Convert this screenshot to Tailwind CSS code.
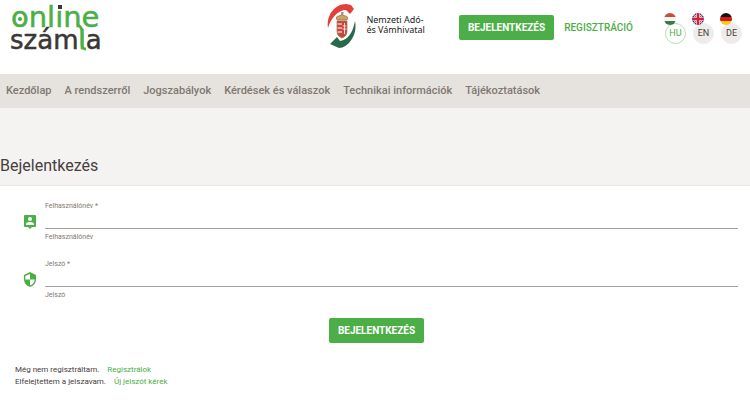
<!DOCTYPE html>
<html lang="hu">
<head>
    <meta charset="UTF-8">
    <meta name="viewport" content="width=device-width, initial-scale=1.0">
    <title>Online Számla - Bejelentkezés</title>
    <script src="https://cdn.jsdelivr.net/npm/@tailwindcss/browser@4"></script>
</head>
<body class="bg-white font-['Roboto',sans-serif] text-[#45403c]">
    <header class="flex items-start h-[74px] pl-[9px] pr-2">
        <a href="#" aria-label="Online Számla">
            <svg class="block w-24 h-14 overflow-visible" viewBox="0 0 96 56" font-family="DejaVu Sans, sans-serif" stroke-width=".5">
                <text x="2" y="27" font-size="29" fill="#4cae46" stroke="#4cae46">onl&#305;ne</text>
                <text x="1" y="49" font-size="26" fill="#3b3735" stroke="#3b3735">szám<tspan fill="#4cae46" stroke="#4cae46">l</tspan>a</text>
                <circle cx="11" cy="19" r="2" fill="#4cae46" />
                <rect x="49" y="5" width="4" height="4" fill="#3b3735" />
                <path d="M69 25 Q73 27 73 32 V45 Q73 49 77 49" fill="none" stroke="#4cae46" stroke-width="2.8" />
            </svg>
        </a>

        <div class="flex items-start ml-auto">
            <!-- Tax authority -->
            <div class="flex gap-2 pt-1 pr-[34px]">
                <svg class="w-8 h-11" viewBox="0 0 32 44">
                    <path d="M2 24 C0 11 9 0 20 0 L25 1 L28 5 L24 10 L20 6 C12 6 5 14 2 24Z" fill="#e2403b" />
                    <path d="M29 17 C32 31 22 44 13 44 L4 40 L11 33 L14 37 C22 36 27 28 29 17Z" fill="#28694b" />
                    <path d="M11 17 H21 V28 Q21 32 16 34 Q11 32 11 28Z" fill="#c9463c" stroke="#9c7a55" stroke-width=".7" />
                    <path d="M11.5 20 H16 M11.5 24 H16 M11.5 28 H16" stroke="#fff" stroke-width="1.2" />
                    <path d="M18.5 19 V30 M16.8 22 H20.2 M16.5 25 H20.5" stroke="#fff" stroke-width=".8" />
                    <path d="M11 16 Q9 12 13 12 Q16 9 19 12 Q23 12 21 16Z" fill="#c9a661" stroke="#926246" stroke-width=".7" />
                    <path d="M16 11 V8 M15 9 H18" stroke="#926246" stroke-width=".8" />
                </svg>
                <p class="pt-[11px] text-[9px] leading-[10px] text-[#222] font-['Noto_Sans',sans-serif]">Nemzeti Adó-<br>és Vámhivatal</p>
            </div>

            <div class="flex items-center gap-[10px] pt-[15px] pr-8 text-[10px] font-bold">
                <button type="button" class="h-[25px] px-[9px] rounded-xs bg-[#4cae46] text-white">BEJELENTKEZÉS</button>
                <a href="#" class="font-medium text-[#4cae46]">REGISZTRÁCIÓ</a>
            </div>

            <!-- Languages -->
            <nav aria-label="Nyelv" class="flex gap-[7px] pt-[23px] text-[9px]">
                <a href="#" class="relative flex items-center justify-center size-[21px] rounded-full border border-[#b5dcb0] text-[#4cae46]">HU
                    <svg class="absolute -left-[2px] -top-[11px] size-3 rounded-full" viewBox="0 0 12 12">
                        <path d="M0 0H12V4H0Z" fill="#ca4b3e" />
                        <path d="M0 4H12V8H0Z" fill="#f7f5f2" />
                        <path d="M0 8H12V12H0Z" fill="#3b7c4c" />
                    </svg>
                </a>
                <a href="#" class="relative flex items-center justify-center size-[21px] rounded-full border border-[#efebea] bg-[#efebea]">EN
                    <svg class="absolute -left-[2px] -top-[11px] size-3 rounded-full" viewBox="0 0 12 12">
                        <path d="M0 0H12V12H0Z" fill="#34356e" />
                        <path d="M0 0L12 12M12 0L0 12" stroke="#fff" stroke-width="1.8" />
                        <path d="M0 0L12 12M12 0L0 12" stroke="#d2203a" stroke-width=".8" />
                        <path d="M6 0V12M0 6H12" stroke="#fff" stroke-width="3.6" />
                        <path d="M6 0V12M0 6H12" stroke="#d2203a" stroke-width="2.4" />
                    </svg>
                </a>
                <a href="#" class="relative flex items-center justify-center size-[21px] rounded-full border border-[#efebea] bg-[#efebea]">DE
                    <svg class="absolute -left-[2px] -top-[11px] size-3 rounded-full" viewBox="0 0 12 12">
                        <path d="M0 0H12V4H0Z" fill="#111" />
                        <path d="M0 4H12V8H0Z" fill="#d81818" />
                        <path d="M0 8H12V12H0Z" fill="#fbc91b" />
                    </svg>
                </a>
            </nav>
        </div>
    </header>

    <nav aria-label="Főmenü" class="flex items-center gap-[13px] h-[34px] px-[6px] bg-[#e6e3df] text-[11px] font-medium text-[#817871] whitespace-nowrap">
        <a href="#">Kezdőlap</a>
        <a href="#">A rendszerről</a>
        <a href="#">Jogszabályok</a>
        <a href="#">Kérdések és válaszok</a>
        <a href="#">Technikai információk</a>
        <a href="#">Tájékoztatások</a>
    </nav>

    <main>
        <div class="pt-12 pb-[9px] bg-[#f4f3f1] border-b border-[#eae8e6]">
            <h1 class="text-base leading-5">Bejelentkezés</h1>
        </div>

        <form class="pt-4 pl-[23px] pr-3 text-[7px] text-[#817871]">
            <div class="flex gap-2 h-[58px]">
                <svg class="w-[14px] h-4 mt-3 shrink-0" viewBox="0 0 14 16">
                    <path d="M2 1H12Q13 1 13 2V12Q13 13 12 13H9L7 15L5 13H2Q1 13 1 12V2Q1 1 2 1Z" fill="#4cae46" />
                    <circle cx="7" cy="5" r="2" fill="#fff" />
                    <path d="M3 11V10Q3 8 7 8Q11 8 11 10V11Z" fill="#fff" />
                </svg>
                <div class="flex flex-col flex-1">
                    <label for="username" class="leading-[8px]">Felhasználónév *</label>
                    <input id="username" type="text" aria-describedby="username-hint" class="w-full h-[19px] border-b border-[#a5a09c] outline-none text-[11px]">
                    <span id="username-hint" class="pt-1 leading-[8px]">Felhasználónév</span>
                </div>
            </div>
            <div class="flex gap-2 h-[58px]">
                <svg class="w-[14px] h-4 mt-3 shrink-0" viewBox="0 0 14 16">
                    <path d="M7 0L13 3V7Q13 13 7 15Q1 13 1 7V3Z" fill="#4cae46" />
                    <path d="M7 2V7.5H2.3V4Z M7 7.5H11.7Q11.2 12 7 13.5Z" fill="#fff" />
                </svg>
                <div class="flex flex-col flex-1">
                    <label for="password" class="leading-[8px]">Jelszó *</label>
                    <input id="password" type="password" aria-describedby="password-hint" class="w-full h-[19px] border-b border-[#a5a09c] outline-none text-[11px]">
                    <span id="password-hint" class="pt-1 leading-[8px]">Jelszó</span>
                </div>
            </div>
            <div class="flex justify-center pr-2">
                <button type="submit" class="h-[25px] px-[9px] rounded-xs bg-[#4cae46] text-[10px] font-bold text-white">BEJELENTKEZÉS</button>
            </div>
        </form>

        <div class="px-[15px] pt-[21px] text-[8px] leading-3">
            <p>Még nem regisztráltam. <a href="#" class="ml-[6px] text-[#4cae46]">Regisztrálok</a></p>
            <p>Elfelejtettem a jelszavam. <a href="#" class="ml-[6px] text-[#4cae46]">Új jelszót kérek</a></p>
        </div>
    </main>
</body>
</html>
